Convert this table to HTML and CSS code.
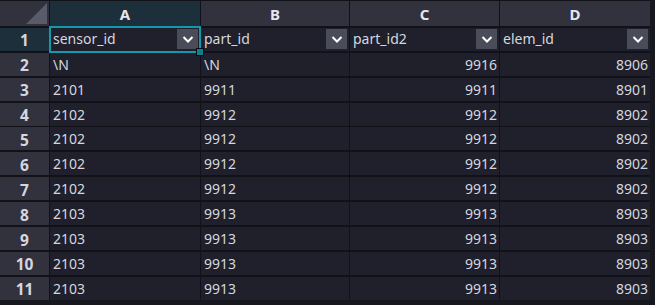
FILE: index.html
```html
<!DOCTYPE html>
<html>
<head>
<meta charset="utf-8">
<link rel="stylesheet" href="styles.css">
</head>
<body>
<div class="sheet">
  <div class="grid">
    <div class="corner"><div class="tri"></div></div>
    <div class="colh sel">A</div>
    <div class="colh">B</div>
    <div class="colh">C</div>
    <div class="colh">D</div>

    <div class="rowh sel">1</div>
    <div class="cell hdr">sensor_id<span class="dd"><svg viewBox="0 0 20 20" width="20" height="20"><path d="M5.5 8 L10 12.5 L14.5 8" fill="none" stroke="#fff" stroke-width="2"/></svg></span></div>
    <div class="cell hdr">part_id<span class="dd"><svg viewBox="0 0 20 20" width="20" height="20"><path d="M5.5 8 L10 12.5 L14.5 8" fill="none" stroke="#fff" stroke-width="2"/></svg></span></div>
    <div class="cell hdr">part_id2<span class="dd"><svg viewBox="0 0 20 20" width="20" height="20"><path d="M5.5 8 L10 12.5 L14.5 8" fill="none" stroke="#fff" stroke-width="2"/></svg></span></div>
    <div class="cell hdr">elem_id<span class="dd"><svg viewBox="0 0 20 20" width="20" height="20"><path d="M5.5 8 L10 12.5 L14.5 8" fill="none" stroke="#fff" stroke-width="2"/></svg></span></div>

    <div class="rowh">2</div><div class="cell">\N</div><div class="cell">\N</div><div class="cell num">9916</div><div class="cell num">8906</div>
    <div class="rowh">3</div><div class="cell">2101</div><div class="cell">9911</div><div class="cell num">9911</div><div class="cell num">8901</div>
    <div class="rowh">4</div><div class="cell">2102</div><div class="cell">9912</div><div class="cell num">9912</div><div class="cell num">8902</div>
    <div class="rowh">5</div><div class="cell">2102</div><div class="cell">9912</div><div class="cell num">9912</div><div class="cell num">8902</div>
    <div class="rowh">6</div><div class="cell">2102</div><div class="cell">9912</div><div class="cell num">9912</div><div class="cell num">8902</div>
    <div class="rowh">7</div><div class="cell">2102</div><div class="cell">9912</div><div class="cell num">9912</div><div class="cell num">8902</div>
    <div class="rowh">8</div><div class="cell">2103</div><div class="cell">9913</div><div class="cell num">9913</div><div class="cell num">8903</div>
    <div class="rowh">9</div><div class="cell">2103</div><div class="cell">9913</div><div class="cell num">9913</div><div class="cell num">8903</div>
    <div class="rowh">10</div><div class="cell">2103</div><div class="cell">9913</div><div class="cell num">9913</div><div class="cell num">8903</div>
    <div class="rowh">11</div><div class="cell">2103</div><div class="cell">9913</div><div class="cell num">9913</div><div class="cell num">8903</div>
  </div>
  <div class="selection"><div class="handle"></div></div>
</div>
</body>
</html>
```

FILE: styles.css
```css
html, body {
  margin: 0;
  padding: 0;
  background: #17181f;
  width: 655px;
  height: 305px;
  overflow: hidden;
}
.sheet {
  position: relative;
  width: 650px;
  font-family: "Noto Sans", sans-serif;
}
.grid {
  display: grid;
  grid-template-columns: 49px 150px 148px 149px 150px;
  grid-template-rows: 25px repeat(11, 23px);
  column-gap: 1px;
  row-gap: 1.9px;
  padding-top: 1px;
  background: #111218;
}
.corner {
  background: #31323e;
  position: relative;
}
.tri {
  position: absolute;
  right: 2px;
  bottom: 2px;
  width: 0;
  height: 0;
  border-left: 21px solid transparent;
  border-bottom: 21px solid #5a5b6a;
}
.colh {
  background: #31323e;
  color: #e6e6ec;
  font-weight: bold;
  font-size: 15px;
  display: flex;
  align-items: center;
  justify-content: center;
}
.colh.sel, .rowh.sel {
  background: #1c2f3b;
}
.rowh {
  background: #31323e;
  color: #d6d6de;
  font-weight: bold;
  font-size: 15.5px;
  display: flex;
  align-items: center;
  justify-content: center;
  padding-top: 2px;
  box-sizing: border-box;
}
.cell {
  background: #1f202c;
  color: #d6d7de;
  font-size: 14px;
  display: flex;
  align-items: center;
  padding: 0 3px;
  white-space: nowrap;
  overflow: hidden;
}
.cell.num {
  justify-content: flex-end;
  padding-right: 2px;
}
.cell.hdr {
  justify-content: space-between;
  padding-right: 2px;
  padding-bottom: 1px;
}
.dd {
  width: 21px;
  height: 20px;
  background: #4b4c59;
  display: flex;
  align-items: center;
  justify-content: center;
}
.dd svg {
  display: block;
}
.selection {
  position: absolute;
  left: 49px;
  top: 25.5px;
  width: 148px;
  height: 23px;
  border: 2px solid #1499ab;
}
.handle {
  position: absolute;
  right: -5px;
  bottom: -5px;
  width: 6px;
  height: 6px;
  background: #0e7f8e;
  border: 1px solid #0b0c10;
}
```
